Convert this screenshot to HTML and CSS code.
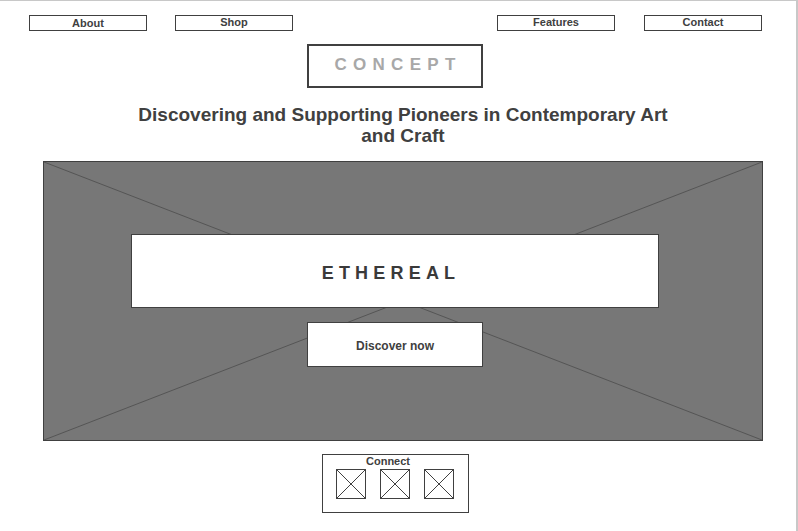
FILE: index.html
```html
<!DOCTYPE html>
<html>
<head>
<meta charset="utf-8">
<link rel="stylesheet" href="styles.css">
</head>
<body>
<div class="frame">
  <nav class="nav">
    <div class="nav-group nav-group--left">
      <a class="nav-btn nav-btn--low">About</a>
      <a class="nav-btn">Shop</a>
    </div>
    <div class="nav-group">
      <a class="nav-btn">Features</a>
      <a class="nav-btn">Contact</a>
    </div>
  </nav>
  <div class="logo">CONCEPT</div>
  <h1 class="headline">Discovering and Supporting Pioneers in Contemporary Art and Craft</h1>
  <section class="hero">
    <svg class="hero-x" viewBox="0 0 100 100" preserveAspectRatio="none">
      <line x1="0" y1="0" x2="100" y2="100" vector-effect="non-scaling-stroke"/>
      <line x1="100" y1="0" x2="0" y2="100" vector-effect="non-scaling-stroke"/>
    </svg>
    <div class="hero-title">ETHEREAL</div>
    <a class="hero-btn">Discover now</a>
  </section>
  <div class="connect">
    <div class="connect-label">Connect</div>
    <div class="connect-icons">
      <svg class="icon" viewBox="0 0 30 30"><rect x="0.5" y="0.5" width="29" height="29"/><line x1="0.5" y1="0.5" x2="29.5" y2="29.5"/><line x1="29.5" y1="0.5" x2="0.5" y2="29.5"/></svg>
      <svg class="icon" viewBox="0 0 30 30"><rect x="0.5" y="0.5" width="29" height="29"/><line x1="0.5" y1="0.5" x2="29.5" y2="29.5"/><line x1="29.5" y1="0.5" x2="0.5" y2="29.5"/></svg>
      <svg class="icon" viewBox="0 0 30 30"><rect x="0.5" y="0.5" width="29" height="29"/><line x1="0.5" y1="0.5" x2="29.5" y2="29.5"/><line x1="29.5" y1="0.5" x2="0.5" y2="29.5"/></svg>
    </div>
  </div>
</div>
</body>
</html>
```
FILE: styles.css
```css
* { box-sizing: border-box; }
html, body { margin: 0; padding: 0; background: #fff; }
body {
  font-family: "Liberation Sans", Arial, Helvetica, sans-serif;
  color: #404040;
}
.frame {
  width: 798px;
  height: 531px;
  border-top: 1px solid #c8c8c8;
  border-right: 2px solid #c8c8c8;
  overflow: hidden;
}
.nav {
  display: flex;
  justify-content: space-between;
  padding: 14px 34px 0 29px;
}
.nav-group {
  display: flex;
  gap: 29px;
}
.nav-group--left { gap: 28px; }
.nav-btn {
  display: block;
  width: 118px;
  height: 16px;
  border: 1px solid #404040;
  font-size: 11px;
  font-weight: bold;
  line-height: 13px;
  text-align: center;
  color: #404040;
}
.nav-btn--low { line-height: 15px; }
.logo {
  width: 176px;
  height: 44px;
  margin: 13px 0 0 307px;
  border: 2px solid #404040;
  color: #a8a8a8;
  font-size: 17px;
  font-weight: bold;
  letter-spacing: 6.3px;
  text-indent: 6px;
  text-align: center;
  line-height: 38px;
}
.headline {
  width: 540px;
  margin: 16px 0 0 133px;
  font-size: 19px;
  line-height: 21px;
  font-weight: bold;
  text-align: center;
  color: #404040;
}
.hero {
  position: relative;
  width: 720px;
  height: 280px;
  margin: 15px 0 0 43px;
  background: #777;
  border: 1px solid #404040;
  padding: 72px 0 0 87px;
}
.hero-x {
  position: absolute;
  left: 0;
  top: 0;
  width: 100%;
  height: 100%;
}
.hero-x line { stroke: #555; stroke-width: 1; }
.hero-title {
  position: relative;
  width: 528px;
  height: 74px;
  background: #fff;
  border: 1px solid #404040;
  padding-right: 8px;
  font-size: 18px;
  font-weight: bold;
  letter-spacing: 5.2px;
  line-height: 76px;
  text-align: center;
  color: #3a3a3a;
}
.hero-btn {
  position: relative;
  display: block;
  width: 176px;
  height: 45px;
  margin: 14px 0 0 176px;
  background: #fff;
  border: 1px solid #404040;
  font-size: 12px;
  font-weight: bold;
  line-height: 46px;
  text-align: center;
  color: #404040;
}
.connect {
  width: 147px;
  height: 59px;
  margin: 13px 0 0 322px;
  border: 1px solid #404040;
  padding: 0 0 0 13px;
}
.connect-label {
  font-size: 11px;
  font-weight: bold;
  line-height: 12px;
  padding-left: 30px;
  color: #404040;
}
.connect-icons {
  display: flex;
  gap: 14px;
  margin-top: 2px;
}
.icon { width: 30px; height: 30px; display: block; }
.icon rect { fill: none; stroke: #404040; stroke-width: 1; }
.icon line { stroke: #404040; stroke-width: 1; }
```
